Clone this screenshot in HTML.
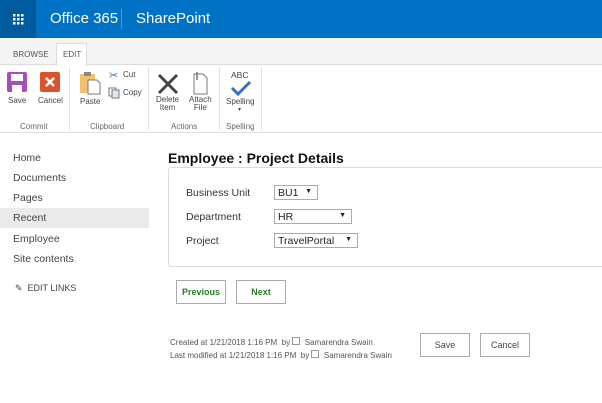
<!DOCTYPE html>
<html><head><style>
*{margin:0;padding:0;box-sizing:border-box}
body{width:602px;height:403px;overflow:hidden;background:#fff;font-family:"Liberation Sans",sans-serif;position:relative;color:#444}
.a{position:absolute}
.top{left:0;top:0;width:602px;height:38px;background:#0072c6}
.waf{left:0;top:0;width:36px;height:38px;background:#005a9e}
.t{color:#fff;font-size:15px;top:10px}
.nav{left:13px;font-size:10.5px;color:#444}
.lbl{font-size:10.5px;color:#333}
.sel{border:1px solid #ababab;background:#fff;height:15px;font-size:10.5px;color:#222;padding:1px 0 0 3px}
.sel span{position:absolute;right:5px;top:2px;font-size:7px}
.btn{border:1px solid #ababab;background:#fff;font-size:9px;text-align:center;line-height:22px}
.rl{font-size:8px;color:#444;text-align:center}
.gl{font-size:8px;color:#666;top:122px}
.sep{top:67px;width:1px;height:63px;background:#e1e1e1}
</style></head><body>
<div class="a top"></div>
<div class="a waf"><svg width="36" height="38"><g fill="#fff"><rect x="13" y="14" width="2.5" height="2.5"/><rect x="17" y="14" width="2.5" height="2.5"/><rect x="21" y="14" width="2.5" height="2.5"/><rect x="13" y="18" width="2.5" height="2.5"/><rect x="17" y="18" width="2.5" height="2.5"/><rect x="21" y="18" width="2.5" height="2.5"/><rect x="13" y="22" width="2.5" height="2.5"/><rect x="17" y="22" width="2.5" height="2.5"/><rect x="21" y="22" width="2.5" height="2.5"/></g></svg></div>
<div class="a t" style="left:50px">Office 365</div>
<div class="a" style="left:121px;top:9px;width:1px;height:20px;background:#4d9ad8"></div>
<div class="a t" style="left:136px">SharePoint</div>
<div class="a" style="left:0;top:38px;width:602px;height:27px;background:#f4f4f4;border-bottom:1px solid #dcdcdc"></div>
<div class="a" style="left:56px;top:43px;width:31px;height:23px;background:#fff;border:1px solid #dcdcdc;border-bottom:none"></div>
<div class="a" style="left:13px;top:50px;font-size:8px;color:#555">BROWSE</div>
<div class="a" style="left:63px;top:50px;font-size:8px;color:#555">EDIT</div>
<div class="a" style="left:0;top:132px;width:602px;height:1px;background:#e1e1e1"></div>
<div class="a sep" style="left:69px"></div><div class="a sep" style="left:148px"></div><div class="a sep" style="left:219px"></div><div class="a sep" style="left:261px"></div>
<svg class="a" style="left:7px;top:72px" width="20" height="20"><rect x="0" y="0" width="20" height="20" rx="2" fill="#a84dbc"/><rect x="4" y="2" width="12" height="7" fill="#fff"/><rect x="5" y="13" width="10" height="7" fill="#fff"/></svg>
<svg class="a" style="left:40px;top:72px" width="20" height="20"><rect width="20" height="20" rx="2" fill="#d9532c"/><path d="M6 6L14 14M14 6L6 14" stroke="#fff" stroke-width="2.5"/></svg>
<div class="a rl" style="left:8px;top:96px">Save</div>
<div class="a rl" style="left:38px;top:96px">Cancel</div>
<div class="a gl" style="left:20px">Commit</div>
<svg class="a" style="left:79px;top:71px" width="22" height="24"><rect x="1" y="3" width="15" height="19" fill="#f0c16f"/><rect x="5" y="1" width="7" height="4" fill="#888"/><path d="M9 9h9l3 3v11H9z" fill="#fff" stroke="#777"/></svg>
<div class="a rl" style="left:80px;top:97px">Paste</div>
<div class="a" style="left:109px;top:69px;font-size:11px;color:#3a6fb0">✂</div><div class="a rl" style="left:123px;top:70px">Cut</div>
<svg class="a" style="left:108px;top:87px" width="12" height="12"><rect x="1" y="1" width="7" height="8" fill="#fff" stroke="#777"/><rect x="4" y="3" width="7" height="8" fill="#dbe8f5" stroke="#777"/></svg><div class="a rl" style="left:123px;top:88px">Copy</div>
<div class="a gl" style="left:90px">Clipboard</div>
<svg class="a" style="left:157px;top:73px" width="22" height="22"><path d="M2 2L20 20M20 2L2 20" stroke="#444" stroke-width="3"/></svg>
<div class="a rl" style="left:156px;top:96px;line-height:8px">Delete<br>Item</div>
<svg class="a" style="left:191px;top:70px" width="18" height="25"><path d="M3 4h9l4 4v16H3z" fill="#fff" stroke="#777"/><path d="M6 2v8" stroke="#777" stroke-width="1.5"/></svg>
<div class="a rl" style="left:189px;top:96px;line-height:8px">Attach<br>File</div>
<div class="a gl" style="left:171px">Actions</div>
<div class="a" style="left:231px;top:70px;font-size:8.5px;color:#444">ABC</div>
<svg class="a" style="left:230px;top:80px" width="22" height="16"><path d="M2 8L8 14L20 2" stroke="#2f73c2" stroke-width="3" fill="none"/></svg>
<div class="a rl" style="left:226px;top:97px">Spelling</div>
<div class="a" style="left:238px;top:106px;font-size:6px">▾</div>
<div class="a gl" style="left:226px">Spelling</div>
<div class="a" style="left:0;top:208px;width:149px;height:20px;background:#eaeaea"></div>
<div class="a nav" style="top:152px">Home</div>
<div class="a nav" style="top:172px">Documents</div>
<div class="a nav" style="top:192px">Pages</div>
<div class="a nav" style="top:212px">Recent</div>
<div class="a nav" style="top:233px">Employee</div>
<div class="a nav" style="top:253px">Site contents</div>
<div class="a" style="left:15px;top:283px;font-size:9px;color:#444">✎ &nbsp;EDIT LINKS</div>
<div class="a" style="left:168px;top:150px;font-size:14px;font-weight:bold;color:#111">Employee : Project Details</div>
<div class="a" style="left:168px;top:167px;width:440px;height:100px;border:1px solid #dcdcdc;border-radius:3px"></div>
<div class="a lbl" style="left:186px;top:187px">Business Unit</div>
<div class="a lbl" style="left:186px;top:211px">Department</div>
<div class="a lbl" style="left:186px;top:235px">Project</div>
<div class="a sel" style="left:274px;top:185px;width:44px">BU1<span>▼</span></div>
<div class="a sel" style="left:274px;top:209px;width:78px">HR<span>▼</span></div>
<div class="a sel" style="left:274px;top:233px;width:84px">TravelPortal<span>▼</span></div>
<div class="a btn" style="left:176px;top:280px;width:50px;height:24px;color:#2a7a2a;font-weight:bold">Previous</div>
<div class="a btn" style="left:236px;top:280px;width:50px;height:24px;color:#2a7a2a;font-weight:bold">Next</div>
<div class="a" style="left:170px;top:336px;font-size:8px;color:#555;line-height:13px">Created at 1/21/2018 1:16 PM &nbsp;by <span style="display:inline-block;width:8px;height:8px;border:1px solid #999"></span> &nbsp;Samarendra Swain<br>Last modified at 1/21/2018 1:16 PM &nbsp;by <span style="display:inline-block;width:8px;height:8px;border:1px solid #999"></span> &nbsp;Samarendra Swain</div>
<div class="a btn" style="left:420px;top:333px;width:50px;height:24px;color:#444">Save</div>
<div class="a btn" style="left:480px;top:333px;width:50px;height:24px;color:#444">Cancel</div>
</body></html>
